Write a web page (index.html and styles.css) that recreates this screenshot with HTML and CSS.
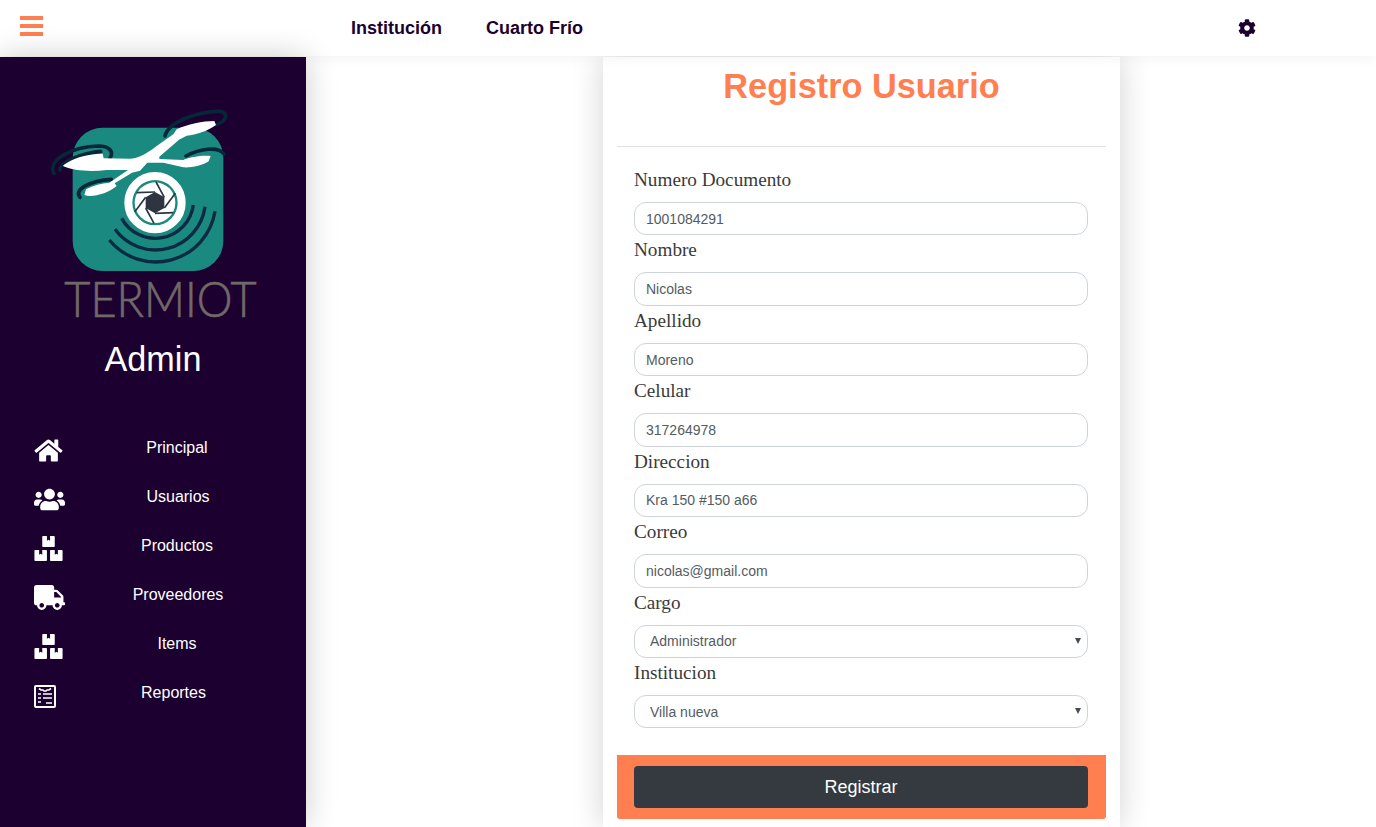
FILE: index.html
```html
<!DOCTYPE html>
<html lang="es">
<head>
<meta charset="utf-8">
<title>Registro Usuario</title>
<link rel="stylesheet" href="styles.css">
</head>
<body>
<header class="topbar">
  <button class="burger" type="button" aria-label="Menú"><span></span><span></span><span></span></button>
  <nav class="topnav">
    <a href="#">Institución</a>
    <a href="#">Cuarto Frío</a>
  </nav>
  <svg class="gear" viewBox="0 0 512 512"><path d="M487.4 315.7l-42.6-24.6c4.3-23.2 4.3-47 0-70.2l42.6-24.6c4.9-2.8 7.1-8.6 5.5-14-11.1-35.6-30-67.8-54.7-94.6-3.8-4.1-10-5.1-14.8-2.3L380.8 110c-17.9-15.4-38.5-27.3-60.8-35.1V25.8c0-5.6-3.9-10.5-9.4-11.7-36.7-8.2-74.3-7.8-109.2 0-5.5 1.2-9.4 6.1-9.4 11.7V75c-22.2 7.9-42.8 19.8-60.8 35.1L88.7 85.5c-4.9-2.8-11-1.9-14.8 2.3-24.7 26.7-43.6 58.9-54.7 94.6-1.7 5.4.6 11.2 5.5 14L67.3 221c-4.3 23.2-4.3 47 0 70.2l-42.6 24.6c-4.9 2.8-7.1 8.6-5.5 14 11.1 35.6 30 67.8 54.7 94.6 3.8 4.1 10 5.1 14.8 2.3l42.6-24.6c17.9 15.4 38.5 27.3 60.8 35.1v49.2c0 5.6 3.9 10.5 9.4 11.7 36.7 8.2 74.3 7.8 109.2 0 5.5-1.2 9.4-6.1 9.4-11.7v-49.2c22.2-7.9 42.8-19.8 60.8-35.1l42.6 24.6c4.9 2.8 11 1.9 14.8-2.3 24.7-26.7 43.6-58.9 54.7-94.6 1.5-5.5-.7-11.3-5.6-14.1zM256 336c-44.1 0-80-35.9-80-80s35.9-80 80-80 80 35.9 80 80-35.9 80-80 80z"/></svg>
</header>
<div class="layout">
  <aside class="sidebar">
    <svg class="logo" viewBox="0 0 780 720">
      <rect class="logo-tile" x="128" y="113" width="452" height="430" rx="90"/>
      <g class="logo-waves">
        <path d="M275 385A115 115 0 0 0 490 345"/>
        <path d="M255 418A150 150 0 0 0 525 350"/>
        <path d="M238 450A180 180 0 0 0 555 364"/>
      </g>
      <g class="logo-rotors">
        <path d="M405 138C415 95 510 62 572 64C596 72 590 92 560 104"/>
        <path d="M72 250C50 212 125 170 205 168C240 168 252 186 240 204"/>
        <path d="M90 240C88 218 150 190 212 184"/>
        <path d="M468 198C510 176 565 168 582 192"/>
        <path d="M150 322C130 298 180 272 244 268"/>
      </g>
      <path class="logo-frame" d="M100 226C125 205 170 192 218 191L221 205L300 206C320 206 345 195 380 168L430 133L440 118C470 103 520 93 553 93L558 105C530 124 500 134 470 137L447 149L388 200L388 207L460 210C480 200 520 195 542 198L536 214C520 227 480 234 460 232L400 218L352 218L330 242L306 248L254 280L260 288C235 310 185 324 163 315L168 298C190 286 215 280 238 278L294 240L230 240C180 246 130 242 100 229Z"/>
      <circle class="logo-ring" cx="375" cy="338" r="80"/>
      <circle class="logo-aperture" cx="375" cy="338" r="61"/>
      <path class="logo-iris" d="M375 306L403 322L403 354L375 370L347 354L347 322Z"/>
      <g class="logo-blades">
        <path d="M403 322L378 276"/>
        <path d="M403 354L436 310"/>
        <path d="M375 370L430 368"/>
        <path d="M347 354L372 400"/>
        <path d="M347 322L314 366"/>
        <path d="M375 306L320 308"/>
      </g>
      <text class="logo-word" x="103" y="680" textLength="577" lengthAdjust="spacingAndGlyphs">TERMIOT</text>
    </svg>
    <h2 class="role">Admin</h2>
    <nav class="sidenav">
      <a class="sidenav-item" href="#">
        <svg class="ico ico-home" viewBox="0 0 576 512"><path d="M280.37 148.26L96 300.11V464a16 16 0 0 0 16 16l112.06-.29a16 16 0 0 0 15.92-16V368a16 16 0 0 1 16-16h64a16 16 0 0 1 16 16v95.64a16 16 0 0 0 16 16.05L464 480a16 16 0 0 0 16-16V300L295.67 148.26a12.19 12.19 0 0 0-15.3 0zM571.6 251.47L488 182.56V44.05a12 12 0 0 0-12-12h-56a12 12 0 0 0-12 12v72.61L318.47 43a48 48 0 0 0-61 0L4.34 251.47a12 12 0 0 0-1.6 16.9l25.5 31A12 12 0 0 0 45.15 301l235.22-193.74a12.19 12.19 0 0 1 15.3 0L530.9 301a12 12 0 0 0 16.9-1.6l25.5-31a12 12 0 0 0-1.7-16.93z"/></svg>
        <span>Principal</span>
      </a>
      <a class="sidenav-item" href="#">
        <svg class="ico ico-wide" viewBox="0 0 640 512"><path d="M96 224c35.3 0 64-28.7 64-64s-28.7-64-64-64-64 28.7-64 64 28.7 64 64 64zm448 0c35.3 0 64-28.7 64-64s-28.7-64-64-64-64 28.7-64 64 28.7 64 64 64zm32 32h-64c-17.6 0-33.5 7.1-45.1 18.6 40.3 22.1 68.9 62 75.1 109.4h66c17.7 0 32-14.3 32-32v-32c0-35.3-28.7-64-64-64zm-256 0c61.9 0 112-50.1 112-112S381.9 32 320 32 208 82.1 208 144s50.1 112 112 112zm76.8 32h-8.3c-20.8 10-43.9 16-68.5 16s-47.6-6-68.5-16h-8.3C179.6 288 128 339.6 128 403.2V432c0 26.5 21.5 48 48 48h288c26.5 0 48-21.5 48-48v-28.8c0-63.6-51.6-115.2-115.2-115.2zm-223.7-13.4C161.5 263.1 145.6 256 128 256H64c-35.3 0-64 28.7-64 64v32c0 17.7 14.3 32 32 32h65.9c6.3-47.4 34.9-87.3 75.2-109.4z"/></svg>
        <span>Usuarios</span>
      </a>
      <a class="sidenav-item" href="#">
        <svg class="ico ico-home" viewBox="0 0 576 512"><path d="M560 288h-80v96l-32-21.3-32 21.3v-96h-80c-8.8 0-16 7.2-16 16v192c0 8.8 7.2 16 16 16h224c8.8 0 16-7.2 16-16V304c0-8.8-7.2-16-16-16zm-384-64h224c8.8 0 16-7.2 16-16V16c0-8.8-7.2-16-16-16h-80v96l-32-21.3L256 96V0h-80c-8.8 0-16 7.2-16 16v192c0 8.8 7.2 16 16 16zm64 64h-80v96l-32-21.3L96 384v-96H16c-8.8 0-16 7.2-16 16v192c0 8.8 7.2 16 16 16h224c8.8 0 16-7.2 16-16V304c0-8.8-7.2-16-16-16z"/></svg>
        <span>Productos</span>
      </a>
      <a class="sidenav-item" href="#">
        <svg class="ico ico-wide" viewBox="0 0 640 512"><path d="M624 352h-16V243.9c0-12.7-5.1-24.9-14.1-33.9L494 110.1c-9-9-21.2-14.1-33.9-14.1H416V48c0-26.5-21.5-48-48-48H48C21.5 0 0 21.5 0 48v320c0 26.5 21.5 48 48 48h16c0 53 43 96 96 96s96-43 96-96h128c0 53 43 96 96 96s96-43 96-96h48c8.8 0 16-7.2 16-16v-32c0-8.8-7.2-16-16-16zM160 464c-26.5 0-48-21.5-48-48s21.5-48 48-48 48 21.5 48 48-21.5 48-48 48zm320 0c-26.5 0-48-21.5-48-48s21.5-48 48-48 48 21.5 48 48-21.5 48-48 48zm80-208H416V144h44.1l99.9 99.9V256z"/></svg>
        <span>Proveedores</span>
      </a>
      <a class="sidenav-item" href="#">
        <svg class="ico ico-home" viewBox="0 0 576 512"><path d="M560 288h-80v96l-32-21.3-32 21.3v-96h-80c-8.8 0-16 7.2-16 16v192c0 8.8 7.2 16 16 16h224c8.8 0 16-7.2 16-16V304c0-8.8-7.2-16-16-16zm-384-64h224c8.8 0 16-7.2 16-16V16c0-8.8-7.2-16-16-16h-80v96l-32-21.3L256 96V0h-80c-8.8 0-16 7.2-16 16v192c0 8.8 7.2 16 16 16zm64 64h-80v96l-32-21.3L96 384v-96H16c-8.8 0-16 7.2-16 16v192c0 8.8 7.2 16 16 16h224c8.8 0 16-7.2 16-16V304c0-8.8-7.2-16-16-16z"/></svg>
        <span>Items</span>
      </a>
      <a class="sidenav-item" href="#">
        <svg class="ico ico-report" viewBox="0 0 22 25">
          <path class="report-box" d="M1 4a1 1 0 0 1 1-1h18a1 1 0 0 1 1 1v19a1 1 0 0 1-1 1H2a1 1 0 0 1-1-1z"/>
          <path class="report-lines" d="M5 5.500l2 1.500h2l1 1h2l1-1h2l2-1.500M4 11h3M9 11h9M4 15h3M9 15h9M4 19h3M12 20h6"/>
        </svg>
        <span>Reportes</span>
      </a>
    </nav>
  </aside>
  <main class="content">
    <section class="card">
      <h1 class="card-title">Registro Usuario</h1>
      <hr class="rule">
      <form class="form">
        <label class="field"><span class="field-label">Numero Documento</span><input class="control" type="text" value="1001084291"></label>
        <label class="field"><span class="field-label">Nombre</span><input class="control" type="text" value="Nicolas"></label>
        <label class="field"><span class="field-label">Apellido</span><input class="control" type="text" value="Moreno"></label>
        <label class="field"><span class="field-label">Celular</span><input class="control" type="text" value="317264978"></label>
        <label class="field"><span class="field-label">Direccion</span><input class="control" type="text" value="Kra 150 #150 a66"></label>
        <label class="field"><span class="field-label">Correo</span><input class="control" type="text" value="nicolas@gmail.com"></label>
        <label class="field"><span class="field-label">Cargo</span><span class="select-wrap"><select class="control control-select"><option>Administrador</option></select></span></label>
        <label class="field"><span class="field-label">Institucion</span><span class="select-wrap"><select class="control control-select"><option>Villa nueva</option></select></span></label>
      </form>
      <div class="actions"><button class="submit" type="button">Registrar</button></div>
    </section>
  </main>
</div>
</body>
</html>
```
FILE: styles.css
```css
* { box-sizing: border-box; }
html, body { height: 100%; margin: 0; overflow: hidden; }
body {
  display: flex;
  flex-direction: column;
  background: #fff;
  font-family: "Liberation Sans", Arial, sans-serif;
}
.topbar {
  position: relative;
  z-index: 1;
  flex: 0 0 56px;
  display: flex;
  align-items: center;
  padding-left: 20px;
  background: #fff;
  box-shadow: 0 4px 12px rgba(0, 0, 0, .04);
}
.burger {
  display: flex;
  flex-direction: column;
  justify-content: space-between;
  width: 23px;
  height: 20px;
  margin: -4px 0 0;
  padding: 0;
  border: 0;
  background: none;
}
.burger span { display: block; height: 4px; background: #ff7f50; }
.topnav { display: flex; gap: 44px; margin-left: 308px; }
.topnav a {
  color: #1c0030;
  font-size: 18px;
  font-weight: 700;
  text-decoration: none;
}
.gear { width: 18px; height: 18px; margin-left: 655px; fill: #1c0030; }
.layout { position: relative; flex: 1; display: flex; min-height: 0; padding-top: 1px; }
.sidebar {
  position: relative;
  z-index: 2;
  flex: 0 0 306px;
  padding-top: 33px;
  background: #1c0030;
  box-shadow: 0 0 30px rgba(0, 0, 0, .2);
}
.logo { display: block; width: 260px; height: 240px; margin-left: 30px; }
.logo-tile { fill: #1a8a80; }
.logo-waves path { fill: none; stroke: #0c2b42; stroke-width: 10; }
.logo-rotors path { fill: none; stroke: #06263a; stroke-width: 11; stroke-linecap: round; }
.logo-frame { fill: #fff; }
.logo-ring { fill: #1a8a80; stroke: #fff; stroke-width: 24; }
.logo-aperture { fill: #fff; }
.logo-iris { fill: #2e3540; }
.logo-blades path { fill: none; stroke: #2e3540; stroke-width: 5; }
.logo-word {
  fill: #6f6967;
  stroke: #6f6967;
  stroke-width: 2;
  font-family: Lato, "Liberation Sans", sans-serif;
  font-size: 146px;
  font-weight: 300;
}
.role {
  margin: 9px 0 0;
  color: #fff;
  font-size: 34.2px;
  font-weight: 400;
  line-height: 40px;
  text-align: center;
}
.sidenav { display: flex; flex-direction: column; margin-top: 59px; padding: 0 15px 0 34px; }
.sidenav-item {
  display: flex;
  align-items: flex-start;
  height: 49px;
  color: #fff;
  font-size: 16px;
  line-height: 20px;
  text-decoration: none;
}
.sidenav-item span { flex: 1; text-align: center; }
.ico { flex: none; fill: #fff; }
.ico-home { width: 29px; height: 25px; }
.ico-wide { width: 31px; height: 25px; }
.ico-report { width: 22px; height: 25px; }
.report-box { fill: none; stroke: #fff; stroke-width: 2; }
.report-lines { fill: none; stroke: #fff; stroke-width: 1.6; }
.content { flex: 1; min-width: 0; padding-left: 297px; }
.card {
  width: 517px;
  height: 100%;
  padding: 0 14px;
  background: #fff;
  box-shadow: 0 0 30px rgba(0, 0, 0, .18);
}
.card-title {
  margin: 0;
  padding-top: 9px;
  color: #ff7f50;
  font-size: 34.3px;
  font-weight: 700;
  line-height: 40px;
  text-align: center;
}
.rule { height: 1px; margin: 40px 0 0; border: 0; background: #dee2e6; }
.form { padding: 18px 18px 0 17px; }
.field { display: block; height: 70.43px; }
.field-label {
  display: block;
  height: 37px;
  color: #3a3a3a;
  font-family: "Liberation Serif", "Times New Roman", serif;
  font-size: 19.2px;
  line-height: 30px;
}
.control {
  display: block;
  width: 100%;
  height: 33.4px;
  padding: 0 11px;
  border: 1px solid #ced4da;
  border-radius: 12px;
  background: #fff;
  color: #555b62;
  font-family: "Liberation Sans", Arial, sans-serif;
  font-size: 14px;
}
.control-select { padding: 0 15px; appearance: none; }
.select-wrap { position: relative; display: block; }
.select-wrap::after {
  content: "";
  position: absolute;
  top: 13px;
  right: 7px;
  border-style: solid;
  border-width: 6px 3px 0;
  border-color: #444c55 transparent transparent;
}
.actions {
  margin-top: 27px;
  padding: 11px 18px 11px 17px;
  border-radius: 0 0 3px 3px;
  background: #ff7f50;
}
.submit {
  display: block;
  width: 100%;
  height: 42px;
  border: 0;
  border-radius: 4px;
  background: #343a40;
  color: #fff;
  font-family: "Liberation Sans", Arial, sans-serif;
  font-size: 18px;
}
```
